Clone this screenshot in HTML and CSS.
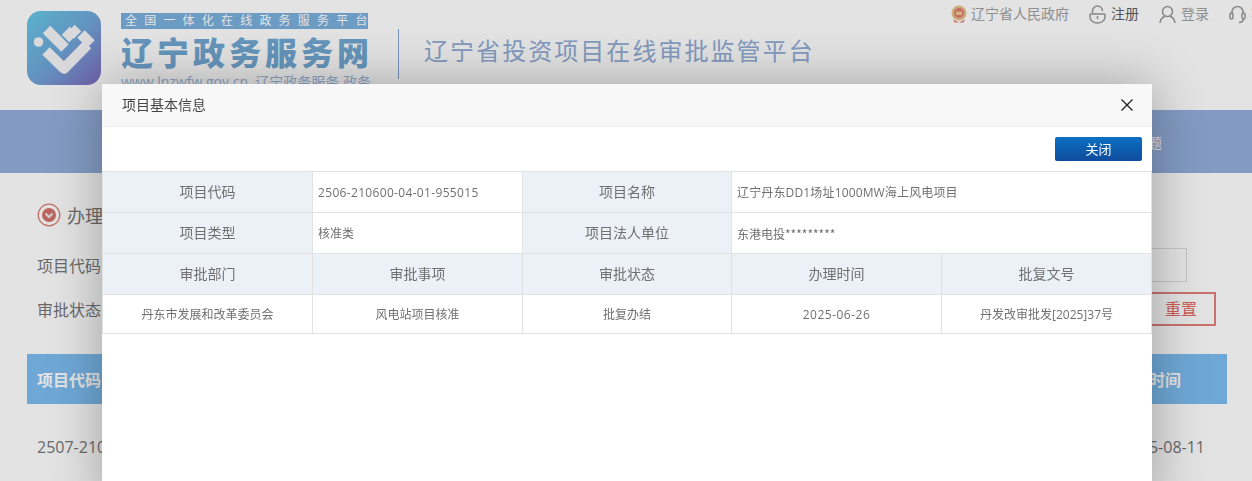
FILE: index.html
```html
<!DOCTYPE html>
<html lang="zh-CN">
<head>
<meta charset="utf-8">
<title>辽宁政务服务网</title>
<link rel="stylesheet" href="styles.css">
</head>
<body>
<div class="page">
  <header class="header">
    <svg class="logo" viewBox="0 0 74 74" aria-hidden="true">
      <defs><linearGradient id="lg" x1="0" y1="0" x2="1" y2="1"><stop offset="0" stop-color="#66c8e6"/><stop offset=".5" stop-color="#6fa6d8"/><stop offset="1" stop-color="#7f6cbf"/></linearGradient></defs>
      <rect width="74" height="74" rx="14" fill="url(#lg)"/>
      <circle cx="11.500" cy="31" r="4.800" fill="#f4f4f8"/>
      <g stroke="#f4f4f8" stroke-width="10.500" fill="none" stroke-linejoin="round">
        <path d="M19.500 18.500L38 37"/><path d="M38.500 27.500L46.500 19.500"/><path d="M44 17.500L50.500 24"/><path d="M54 23L64 33"/><path d="M19 40L37 57.500L60.500 33.500"/>
      </g>
    </svg>
    <div class="brand">
      <div class="slogan">全国一体化在线政务服务平台</div>
      <div class="brand-name">辽宁政务服务网</div>
      <div class="brand-url">www.lnzwfw.gov.cn&nbsp; 辽宁政务服务 政务</div>
    </div>
    <div class="divider"></div>
    <div class="platform">辽宁省投资项目在线审批监管平台</div>
    <nav class="top-links">
      <a class="top-link"><svg class="emblem" viewBox="0 0 16 18"><circle cx="8" cy="8" r="7.500" fill="#e6c08a"/><circle cx="8" cy="8" r="5" fill="#e07a70"/><rect x="5" y="6.500" width="6" height="3.500" fill="#ecc98e"/><path d="M2 14.500L8 17.500L14 14.500L12.500 17.500H3.500Z" fill="#e07a70"/></svg>辽宁省人民政府</a>
      <a class="top-link dark"><svg class="ico" viewBox="0 0 17 19"><path d="M3.500 8V6a5 5 0 0 1 10 0" /><path d="M1 9H16"/><path d="M1 9V12a7.500 6 0 0 0 15 0V9"/><path d="M8.500 11V14"/></svg>注册</a>
      <a class="top-link"><svg class="ico" viewBox="0 0 17 19"><circle cx="8.500" cy="6.500" r="5"/><path d="M1 18C1.500 14 4 12 6 11.300M16 18C15.500 14 13 12 11 11.300"/></svg>登录</a>
      <a class="top-link"><svg class="ico" viewBox="0 0 17 19"><path d="M3 9V7a5.500 5.500 0 0 1 11 0V9"/><rect x="1" y="8" width="3" height="6" rx="1.500"/><rect x="13" y="8" width="3" height="6" rx="1.500"/><path d="M14.500 14C14 16.500 12.500 17.500 10 17.500"/></svg>客服</a>
    </nav>
  </header>
  <div class="nav-band"><span class="nav-item">专题</span></div>
  <main class="main">
    <div class="section-title">
      <svg class="chev" viewBox="0 0 24 24"><circle cx="12" cy="12" r="10.800" fill="none" stroke="#d97f78" stroke-width="1.300"/><circle cx="12" cy="12" r="7" fill="#d4736c"/><path d="M8.500 10.500L12 14L15.500 10.500" fill="none" stroke="#eee" stroke-width="2"/></svg>
      办理结果
    </div>
    <div class="form-row"><span class="label">项目代码</span><span class="input"></span></div>
    <div class="form-row"><span class="label">审批状态</span><span class="reset">重置</span></div>
    <div class="list-head"><span>项目代码</span><span>办理时间</span></div>
    <div class="list-row"><span>2507-210600-04-01-100000</span><span>2025-08-11</span></div>
  </main>
</div>
<div class="shade"></div>
<section class="modal">
  <div class="modal-title"><span class="modal-name">项目基本信息</span>
    <svg class="x" viewBox="0 0 12 12"><path d="M.5.500L11.500 11.500M11.500.500L.5 11.500"/></svg>
  </div>
  <div class="modal-tools"><button class="close-btn">关闭</button></div>
  <table class="info">
    <colgroup><col class="wide"><col class="wide"><col class="narrow"><col class="wide"><col class="wide"></colgroup>
    <tr><th>项目代码</th><td class="val code">2506-210600-04-01-955015</td><th>项目名称</th><td class="val name" colspan="2">辽宁丹东DD1场址1000MW海上风电项目</td></tr>
    <tr><th>项目类型</th><td class="val">核准类</td><th>项目法人单位</th><td class="val masked" colspan="2">东港电投*********</td></tr>
    <tr><th>审批部门</th><th>审批事项</th><th>审批状态</th><th>办理时间</th><th>批复文号</th></tr>
    <tr class="data"><td>丹东市发展和改革委员会</td><td>风电站项目核准</td><td>批复办结</td><td class="date">2025-06-26</td><td>丹发改审批发[2025]37号</td></tr>
  </table>
</section>
</body>
</html>
```
FILE: styles.css
```css
* { box-sizing: border-box; }
html, body { margin: 0; height: 481px; overflow: hidden; }
body { font-family: "Open Sans", "Noto Sans CJK SC", sans-serif; background: #fff; color: #707070; }
.page { height: 481px; overflow: hidden; }
.header { height: 110px; display: flex; align-items: flex-start; padding-left: 27px; position: relative; }
.logo { width: 74px; height: 74px; margin-top: 11px; flex: none; }
.brand { margin-left: 20px; margin-top: 13px; width: 252px; flex: none; }
.slogan { width: 247px; height: 16px; background: #7ab0dd; color: #fff; font-size: 12px; line-height: 16px; letter-spacing: 7.200px; padding-left: 4px; white-space: nowrap; }
.brand-name { font-family: "Noto Sans CJK SC", sans-serif; font-size: 32px; font-weight: 900; color: #72a8d3; line-height: 45px; letter-spacing: 4px; white-space: nowrap; }
.brand-url { font-size: 14px; color: #9db8da; line-height: 18px; margin-top: -1px; white-space: nowrap; }
.divider { width: 1px; height: 50px; margin: 29px 0 0 25px; background: #86a8d6; flex: none; }
.platform { margin: 33px 0 0 25px; font-size: 24px; line-height: 36px; letter-spacing: 2.050px; color: #93add6; white-space: nowrap; flex: none; }
.top-links { margin-left: auto; margin-right: -27px; display: flex; gap: 20px; padding-top: 4px; flex: none; }
.top-link { display: flex; align-items: center; gap: 5px; font-size: 14px; line-height: 20px; color: #a0a0a0; white-space: nowrap; }
.top-link.dark { color: #606060; }
.emblem { width: 16px; height: 18px; margin-right: -1px; }
.ico { width: 17px; height: 19px; fill: none; stroke: #999; stroke-width: 1.500; }
.nav-band { height: 63px; background: #94afdb; display: flex; justify-content: flex-end; align-items: center; padding-right: 90px; }
.nav-item { font-size: 14px; color: #fff; }
.main { padding: 30px 25px 0 27px; }
.section-title { display: flex; align-items: center; gap: 6px; height: 23px; padding-left: 10px; font-size: 18px; color: #777; }
.chev { width: 24px; height: 24px; flex: none; }
.form-row { display: flex; justify-content: space-between; align-items: center; height: 34px; padding-left: 10px; font-size: 16px; margin-top: 10px; color: #777; }
.section-title + .form-row { margin-top: 22px; }
.input { width: 200px; height: 34px; margin-right: 40px; border: 1px solid #ddd; background: #fff; }
.reset { width: 70px; height: 34px; margin-right: 11px; border: 2px solid #e57f7c; color: #e46a66; font-size: 16px; line-height: 30px; text-align: center; }
.list-head { display: flex; justify-content: space-between; align-items: center; height: 50px; margin-top: 28px; padding: 0 46px 0 10px; background: #7dbdf1; color: #fff; font-size: 16px; font-weight: 700; }
.list-row { display: flex; justify-content: space-between; padding: 0 22px 0 10px; margin-top: 31px; font-size: 16px; line-height: 24px; color: #777; }
.shade { position: fixed; inset: 0; background: rgba(0, 0, 0, .11); }
.modal { position: absolute; left: 102px; top: 84px; width: 1050px; height: 420px; background: #fff; box-shadow: 1px 1px 50px rgba(0, 0, 0, .3); }
.modal-title { display: flex; justify-content: space-between; align-items: center; height: 43px; padding: 0 19px 0 20px; background: #f8f8f8; border-bottom: 1px solid #eee; font-size: 14px; color: #444; }
.modal-name { position: relative; top: -1px; }
.x { width: 12px; height: 12px; stroke: #222; stroke-width: 1.300; fill: none; }
.modal-tools { display: flex; justify-content: flex-end; height: 44px; padding: 10px 10px 0 0; }
.close-btn { width: 87px; height: 24px; padding: 0; border: 0; border-radius: 2px; background: linear-gradient(#0b6fc2, #0f4c9e); color: #fff; font: 13px/24px "Noto Sans CJK SC", sans-serif; }
.info { width: 1049px; border-collapse: collapse; table-layout: fixed; font-size: 12px; color: #707070; border-top: 1px solid #ddd; }
.wide { width: 210px; }
.narrow { width: 209px; }
.info th, .info td { height: 41px; padding: 0; border: 1px solid #e2e2e2; text-align: center; font-weight: 400; }
.info th { background: #ecf1f8; font-size: 14px; color: #707070; padding-bottom: 2px; }
.info td.val { text-align: left; padding-left: 5px; }
.info td.code { letter-spacing: .33px; }
.info td.date { letter-spacing: .5px; }
.info td.name { letter-spacing: .15px; }
.info td.masked { font-family: "Noto Sans CJK SC", sans-serif; }
.info .data td { height: 39px; }
```
